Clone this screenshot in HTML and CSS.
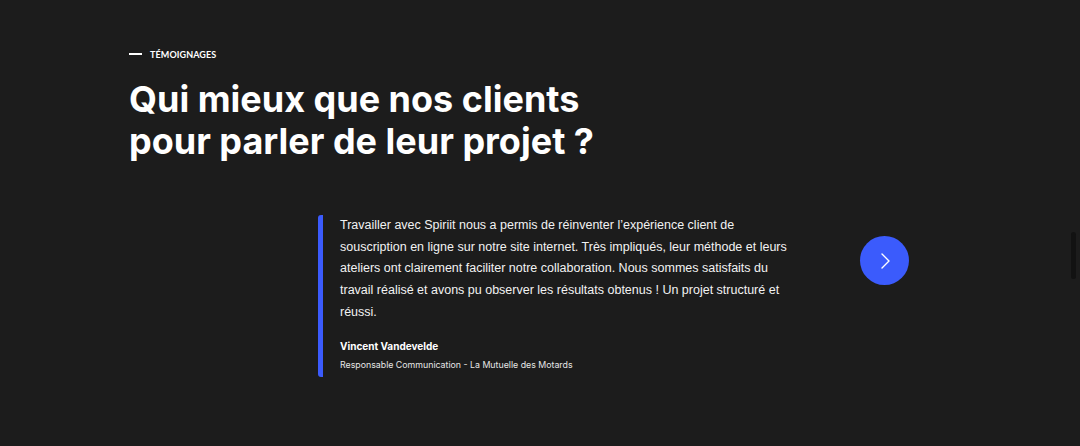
FILE: index.html
```html
<!DOCTYPE html>
<html lang="fr">
<head>
<meta charset="utf-8">
<link rel="stylesheet" href="styles.css">
</head>
<body>
<section class="testimonials">
  <div class="eyebrow"><span class="dash"></span><span class="eyebrow-text">TÉMOIGNAGES</span></div>
  <h2 class="title">Qui mieux que nos clients<br>pour parler de leur projet ?</h2>
  <div class="slider">
    <blockquote class="quote">
      <p class="quote-text">Travailler avec Spiriit nous a permis de réinventer l’expérience client de souscription en ligne sur notre site internet. Très impliqués, leur méthode et leurs ateliers ont clairement faciliter notre collaboration. Nous sommes satisfaits du travail réalisé et avons pu observer les résultats obtenus ! Un projet structuré et réussi.</p>
      <p class="author">Vincent Vandevelde</p>
      <p class="role">Responsable Communication - La Mutuelle des Motards</p>
    </blockquote>
    <button class="next" aria-label="Suivant">
      <svg width="14" height="18" viewBox="0 0 14 18"><path d="M4 2 L11 9 L4 16" fill="none" stroke="#fff" stroke-width="1.4" stroke-linecap="round" stroke-linejoin="round"/></svg>
    </button>
  </div>
  <div class="scrollbar"></div>
</section>
</body>
</html>
```
FILE: styles.css
```css
html, body {
  margin: 0;
  padding: 0;
  background: #1c1c1c;
  height: 100%;
  overflow: hidden;
}
body {
  font-family: "Lato", "Liberation Sans", sans-serif;
  color: #fff;
}
.testimonials {
  position: relative;
  height: 446px;
  padding: 47px 0 0 129px;
  box-sizing: border-box;
}
.eyebrow {
  display: flex;
  align-items: center;
  gap: 8px;
  height: 14px;
}
.dash {
  width: 13px;
  height: 1.5px;
  background: #fff;
}
.eyebrow-text {
  font-size: 9px;
  font-weight: 700;
  letter-spacing: 0.1px;
}
.title {
  margin: 17px 0 0;
  font-family: "Inter", "Lato", sans-serif;
  font-size: 36px;
  line-height: 42px;
  font-weight: 700;
  letter-spacing: 0;
}
.slider {
  display: flex;
  align-items: flex-start;
  margin: 53px 0 0 189px;
}
.quote {
  margin: 0;
  width: 450px;
  border-left: 5px solid #3b5bfc;
  border-radius: 3px;
  padding: 0 0 6px 17px;
}
.quote-text {
  margin: 0;
  font-family: "Liberation Sans", sans-serif;
  font-size: 12.5px;
  line-height: 21.7px;
  color: #f2f2f2;
}
.author {
  margin: 15px 0 0;
  font-family: "Inter", "Lato", sans-serif;
  font-size: 10px;
  font-weight: 700;
  line-height: 14px;
}
.role {
  margin: 6px 0 0;
  font-family: "Inter", "Lato", sans-serif;
  font-size: 8.8px;
  line-height: 12px;
  color: #e6e6e6;
}
.next {
  margin-left: 70px;
  margin-top: 21px;
  width: 49px;
  height: 49px;
  flex-shrink: 0;
  border-radius: 50%;
  border: 0;
  background: #3b5bfc;
  display: flex;
  align-items: center;
  justify-content: center;
  padding: 0;
}
.scrollbar {
  position: absolute;
  right: 4px;
  top: 232px;
  width: 5px;
  height: 47px;
  border-radius: 3px;
  background: #121212;
}
```
